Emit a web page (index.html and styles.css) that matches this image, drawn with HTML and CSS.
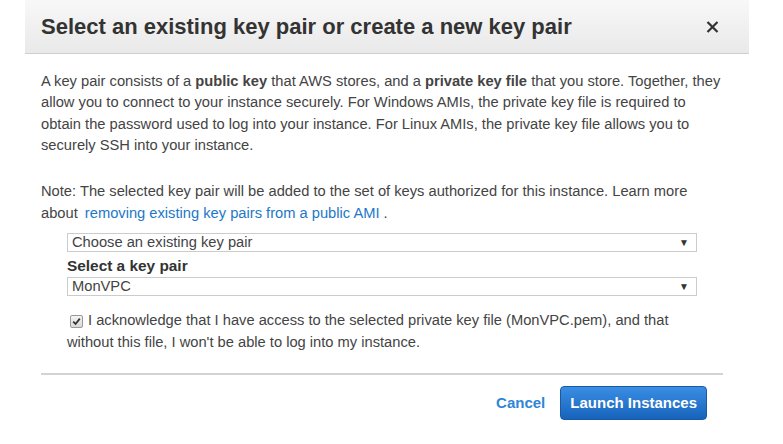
FILE: index.html
```html
<!DOCTYPE html>
<html>
<head>
<meta charset="utf-8">
<link rel="stylesheet" href="styles.css">
</head>
<body>
<div class="modal">
  <div class="modal-header">
    <h1 class="title">Select an existing key pair or create a new key pair</h1>
    <span class="close"><svg width="13" height="12" viewBox="0 0 13 12"><path d="M1.5 1 L11.5 11 M11.5 1 L1.5 11" stroke="#333" stroke-width="2.2" fill="none"/></svg></span>
  </div>
  <div class="modal-body">
    <p class="intro">A key pair consists of a <b>public key</b> that AWS stores, and a <b>private key file</b> that you store. Together, they<br>allow you to connect to your instance securely. For Windows AMIs, the private key file is required to<br>obtain the password used to log into your instance. For Linux AMIs, the private key file allows you to<br>securely SSH into your instance.</p>
    <p class="note">Note: The selected key pair will be added to the set of keys authorized for this instance. Learn more<br>about <a class="link" href="#">removing existing key pairs from a public AMI</a> .</p>
    <div class="form">
      <div class="select"><span>Choose an existing key pair</span><span class="arrow">&#9660;</span></div>
      <div class="label">Select a key pair</div>
      <div class="select"><span>MonVPC</span><span class="arrow">&#9660;</span></div>
      <p class="ack"><span class="check"><svg width="9" height="9" viewBox="0 0 9 9"><path d="M1.2 4.6 L3.6 7 L7.8 1.6" fill="none" stroke="#333" stroke-width="1.8"/></svg></span>I acknowledge that I have access to the selected private key file (MonVPC.pem), and that<br>without this file, I won't be able to log into my instance.</p>
    </div>
    <div class="footer">
      <a class="cancel" href="#">Cancel</a>
      <button class="launch">Launch Instances</button>
    </div>
  </div>
</div>
</body>
</html>
```
FILE: styles.css
```css
html, body {
  margin: 0;
  padding: 0;
  background: #fff;
  font-family: "Liberation Sans", Arial, sans-serif;
  color: #444;
}
.modal {
  margin-left: 25px;
  width: 724px;
}
.modal-header {
  height: 53px;
  border-bottom: 1px solid #cfcfcf;
  background: linear-gradient(#f8f8f8, #e9e9e9);
  display: flex;
  align-items: center;
  justify-content: space-between;
  padding: 0 30px 0 16px;
}
.title {
  margin: 0;
  font-size: 22px;
  font-weight: bold;
  color: #333;
  padding-top: 1px;
}
.close {
  display: flex;
  margin-top: 1px;
}
.modal-body {
  padding: 17px 0 0 16px;
  width: 708px;
}
p { margin: 0; }
.intro {
  font-size: 14.7px;
  line-height: 21.4px;
  color: #444;
  white-space: nowrap;
}
.note {
  margin-top: 23px;
  font-size: 14.7px;
  line-height: 22.5px;
  white-space: nowrap;
}
.link {
  color: #2278c8;
  text-decoration: none;
  margin-left: 3px;
}
.form {
  margin-left: 26px;
  margin-top: 8px;
}
.select {
  height: 17px;
  border: 1px solid #ccc;
  display: flex;
  justify-content: space-between;
  align-items: center;
  font-size: 14.7px;
  color: #444;
  padding-left: 4px;
  box-sizing: content-box;
  width: 624px;
}
.arrow {
  font-size: 10px;
  color: #333;
  margin-right: 7px;
}
.label {
  font-size: 15.4px;
  font-weight: bold;
  color: #333;
  height: 25px;
  line-height: 28px;
}
.ack {
  margin-top: 13px;
  font-size: 14.7px;
  line-height: 22px;
  color: #444;
  white-space: nowrap;
}
.check {
  display: inline-flex;
  align-items: center;
  justify-content: center;
  width: 11px;
  height: 11px;
  border: 1px solid #999;
  border-radius: 2px;
  background: linear-gradient(#f4f4f4, #d8d8d8);
  margin: 0 5px 0 3px;
  vertical-align: -1px;
}
.footer {
  margin-top: 20px;
  width: 682px;
  border-top: 2px solid #d3d3d3;
  display: flex;
  justify-content: flex-end;
  align-items: center;
  gap: 15px;
  padding: 11px 16px 0 0;
  box-sizing: border-box;
}
.cancel {
  color: #2f86d6;
  font-weight: bold;
  font-size: 15px;
  text-decoration: none;
}
.launch {
  font-family: "Liberation Sans", Arial, sans-serif;
  font-weight: bold;
  font-size: 15px;
  color: #fff;
  background: linear-gradient(#3a8ee3, #1763bb);
  border: 1px solid #1b5aa3;
  border-radius: 4px;
  height: 34px;
  padding: 0 9px;
}
```
